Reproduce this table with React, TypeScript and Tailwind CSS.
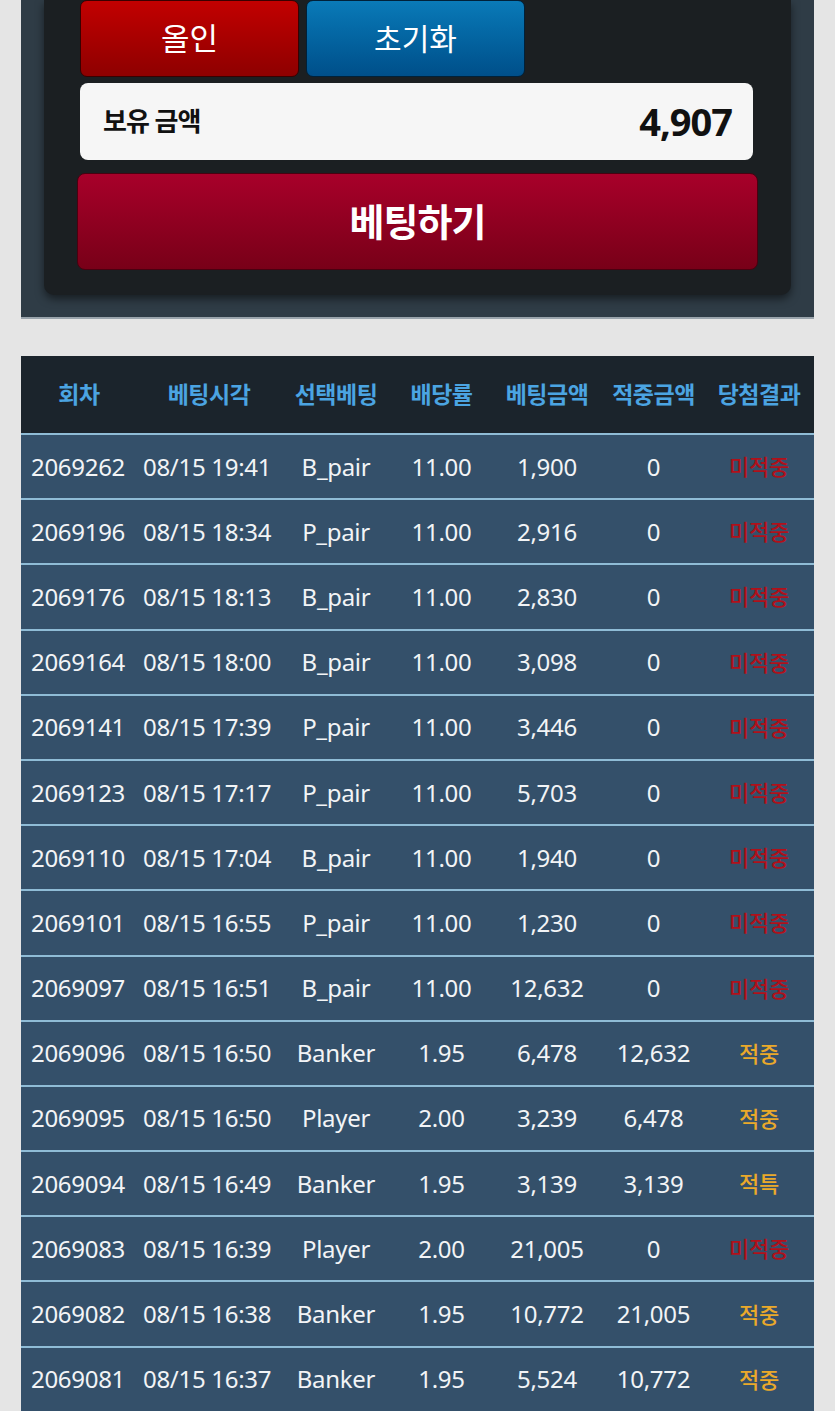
import React from "react";

type Bet = {
    round: string;
    time: string;
    pick: string;
    odds: string;
    amount: string;
    win: string;
    result: "미적중" | "적중" | "적특";
};

const bets: Bet[] = [
    { round: "2069262", time: "08/15 19:41", pick: "B_pair", odds: "11.00", amount: "1,900", win: "0", result: "미적중" },
    { round: "2069196", time: "08/15 18:34", pick: "P_pair", odds: "11.00", amount: "2,916", win: "0", result: "미적중" },
    { round: "2069176", time: "08/15 18:13", pick: "B_pair", odds: "11.00", amount: "2,830", win: "0", result: "미적중" },
    { round: "2069164", time: "08/15 18:00", pick: "B_pair", odds: "11.00", amount: "3,098", win: "0", result: "미적중" },
    { round: "2069141", time: "08/15 17:39", pick: "P_pair", odds: "11.00", amount: "3,446", win: "0", result: "미적중" },
    { round: "2069123", time: "08/15 17:17", pick: "P_pair", odds: "11.00", amount: "5,703", win: "0", result: "미적중" },
    { round: "2069110", time: "08/15 17:04", pick: "B_pair", odds: "11.00", amount: "1,940", win: "0", result: "미적중" },
    { round: "2069101", time: "08/15 16:55", pick: "P_pair", odds: "11.00", amount: "1,230", win: "0", result: "미적중" },
    { round: "2069097", time: "08/15 16:51", pick: "B_pair", odds: "11.00", amount: "12,632", win: "0", result: "미적중" },
    { round: "2069096", time: "08/15 16:50", pick: "Banker", odds: "1.95", amount: "6,478", win: "12,632", result: "적중" },
    { round: "2069095", time: "08/15 16:50", pick: "Player", odds: "2.00", amount: "3,239", win: "6,478", result: "적중" },
    { round: "2069094", time: "08/15 16:49", pick: "Banker", odds: "1.95", amount: "3,139", win: "3,139", result: "적특" },
    { round: "2069083", time: "08/15 16:39", pick: "Player", odds: "2.00", amount: "21,005", win: "0", result: "미적중" },
    { round: "2069082", time: "08/15 16:38", pick: "Banker", odds: "1.95", amount: "10,772", win: "21,005", result: "적중" },
    { round: "2069081", time: "08/15 16:37", pick: "Banker", odds: "1.95", amount: "5,524", win: "10,772", result: "적중" },
];

const headers = ["회차", "베팅시각", "선택베팅", "배당률", "베팅금액", "적중금액", "당첨결과"];
const cols = "grid grid-cols-[116px_144px_110px_101px_110px_103px_108px]";

export default function App() {
    return (
        <div
            className="min-h-[1411px] bg-[#e5e5e5] pb-10"
            style={{ fontFamily: '"Noto Sans", "Noto Sans CJK KR", sans-serif' }}
        >
            <div className="mx-[21px] border-b-2 border-[#9aa4ac] bg-[#2f3c46] px-[23px] pb-[22px]">
                <div className="rounded-b-[10px] bg-[#1b1f22] px-[33px] pb-[25px] shadow-[0_4px_8px_rgba(0,0,0,0.5)]">
                    <div className="flex gap-[7px] pl-[3px]">
                        <button className="flex h-[77px] w-[219px] items-center justify-center rounded-[7px] border border-[#3a0000] bg-gradient-to-b from-[#c20000] to-[#8e0000] text-[31px] text-white">
                            올인
                        </button>
                        <button className="flex h-[77px] w-[219px] items-center justify-center rounded-[7px] border border-[#00213a] bg-gradient-to-b from-[#0a7ab8] to-[#004f8a] text-[30px] text-white">
                            초기화
                        </button>
                    </div>
                    <div className="mt-[6px] ml-[3px] mr-[5px] flex h-[77px] items-center justify-between rounded-[8px] bg-[#f6f6f6] pl-[23px] pr-[21px]">
                        <span className="text-[26px] font-bold tracking-[-1px] text-[#111]">보유 금액</span>
                        <span className="text-[38px] font-bold tracking-[-1px] text-[#111]">4,907</span>
                    </div>
                    <button className="mt-[13px] flex h-[97px] w-full items-center justify-center rounded-[8px] border border-[#4a0010] bg-gradient-to-b from-[#a8002a] to-[#780018] text-[38px] font-bold tracking-[-1px] text-white">
                        베팅하기
                    </button>
                </div>
            </div>

            <div className="mx-[21px] mt-[37px] bg-[#34506a]">
                <div className={`${cols} h-[77px] items-center bg-[#1b242c] text-[23px] font-bold tracking-[-0.5px] text-[#4ba4e2]`}>
                    {headers.map((h) => (
                        <div key={h} className="whitespace-nowrap text-center">
                            {h}
                        </div>
                    ))}
                </div>
                {bets.map((b) => (
                    <div
                        key={b.round}
                        className={`${cols} h-[65.2px] items-center border-t-2 border-[#8fbcd6] text-[24px] tracking-[-0.3px] text-[#f2f4f6]`}
                    >
                        <div className="pl-[10px]">{b.round}</div>
                        <div className="whitespace-nowrap pl-[6px]">{b.time}</div>
                        <div className="text-center">{b.pick}</div>
                        <div className="text-center">{b.odds}</div>
                        <div className="text-center">{b.amount}</div>
                        <div className="text-center">{b.win}</div>
                        <div
                            className={
                                b.result === "미적중"
                                    ? "text-center text-[22px] font-medium text-[#b0101a]"
                                    : "text-center text-[22px] font-medium text-[#eaa92a]"
                            }
                        >
                            {b.result}
                        </div>
                    </div>
                ))}
            </div>
        </div>
    );
}
